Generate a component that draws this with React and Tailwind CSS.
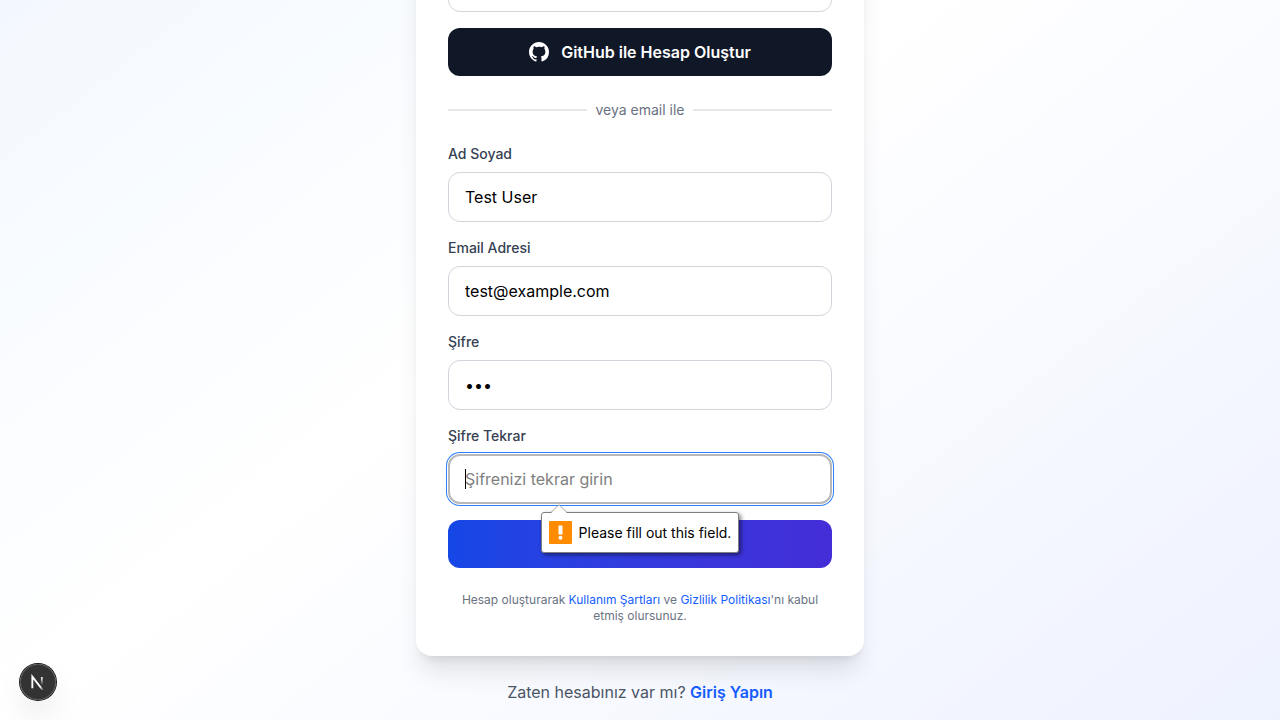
const inputClass =
  "block w-full rounded-xl border border-gray-300 bg-white px-4 py-3 text-base text-black outline-none";
const labelClass = "mb-2 block text-sm font-medium text-gray-700";

function Field({ id, label, type, value }) {
  return (
    <div>
      <label htmlFor={id} className={labelClass}>{label}</label>
      <input id={id} type={type} defaultValue={value} className={inputClass} />
    </div>
  );
}

function GithubMark() {
  return (
    <svg className="mr-3 h-5 w-5" fill="currentColor" viewBox="0 0 20 20" aria-hidden="true">
      <path
        fillRule="evenodd"
        clipRule="evenodd"
        d="M10 0C4.477 0 0 4.484 0 10.017c0 4.425 2.865 8.18 6.839 9.504.5.092.682-.217.682-.483 0-.237-.008-.868-.013-1.703-2.782.605-3.369-1.343-3.369-1.343-.454-1.158-1.11-1.466-1.11-1.466-.908-.62.069-.608.069-.608 1.003.07 1.531 1.032 1.531 1.032.892 1.53 2.341 1.088 2.91.832.092-.647.35-1.088.636-1.338-2.22-.253-4.555-1.113-4.555-4.951 0-1.093.39-1.988 1.029-2.688-.103-.253-.446-1.272.098-2.65 0 0 .84-.27 2.75 1.026A9.564 9.564 0 0110 4.844c.85.004 1.705.115 2.504.337 1.909-1.296 2.747-1.027 2.747-1.027.546 1.379.203 2.398.1 2.651.64.7 1.028 1.595 1.028 2.688 0 3.848-2.339 4.695-4.566 4.942.359.31.678.921.678 1.856 0 1.338-.012 2.419-.012 2.747 0 .268.18.58.688.482A10.019 10.019 0 0020 10.017C20 4.484 15.522 0 10 0z"
      />
    </svg>
  );
}

function ValidationBubble() {
  return (
    <div
      role="alert"
      className="absolute inset-x-0 top-full z-10 mx-auto mt-2 flex w-fit items-center gap-[7px] rounded-[3px] border border-[#808080] bg-white px-[7px] py-2 text-sm whitespace-nowrap text-black shadow-[2px_2px_4px_rgba(0,0,0,0.5)]"
    >
      <svg className="absolute -top-[9px] left-[9px] h-[9px] w-4" viewBox="0 0 16 9" aria-hidden="true">
        <path d="M0 9 L8 0.7 L16 9 Z" fill="#fff" />
        <path d="M0 8.5 L8 0.7 L16 8.5" fill="none" stroke="#999" strokeWidth="0.9" />
      </svg>
      <svg className="h-[23px] w-[23px]" viewBox="0 0 23 23" aria-hidden="true">
        <rect width="23" height="23" rx="1" fill="#ff8c00" />
        <path d="M9.5 4.5h4v9h-4z" fill="#fff" />
        <circle cx="11.5" cy="16.8" r="2" fill="#fff" />
      </svg>
      Please fill out this field.
    </div>
  );
}

function DevBadge() {
  return (
    <button
      type="button"
      aria-label="Open Next.js Dev Tools"
      className="fixed bottom-5 left-5 flex h-9 w-9 items-center justify-center rounded-full bg-black/80 shadow-[0_0_0_1px_#171717,inset_0_0_0_1px_rgba(255,255,255,0.14),0_16px_32px_-8px_rgba(0,0,0,0.24)]"
    >
      <svg className="h-4 w-4" viewBox="0 -1.6 16 16" fill="none" aria-hidden="true">
        <defs>
          <linearGradient id="n-diagonal" x1="9.96" y1="11.12" x2="15.48" y2="17.97" gradientUnits="userSpaceOnUse">
            <stop stopColor="#fff" />
            <stop offset="0.6" stopColor="#fff" stopOpacity="0" />
          </linearGradient>
          <linearGradient id="n-stem" x1="11.82" y1="1.4" x2="11.79" y2="9.63" gradientUnits="userSpaceOnUse">
            <stop stopColor="#fff" />
            <stop offset="1" stopColor="#fff" stopOpacity="0" />
          </linearGradient>
        </defs>
        <path d="M13.3 15.2 L2.34 1 V12.6" stroke="url(#n-diagonal)" strokeWidth="1.86" />
        <path d="M11.825 1.5 V13.1" stroke="url(#n-stem)" strokeWidth="1.86" />
      </svg>
    </button>
  );
}

export default function App() {
  return (
    <div className="flex h-screen flex-col justify-end overflow-hidden font-['Inter',sans-serif]">
      <main className="flex shrink-0 justify-center bg-linear-to-br from-blue-50 via-white to-indigo-50 px-4 pt-52 pb-4">
        <div className="w-full max-w-md">
          <div className="rounded-2xl bg-white p-8 shadow-xl">
            <div className="space-y-4">
              <button
                type="button"
                aria-label="Google ile Hesap Oluştur"
                className="block h-[50px] w-full rounded-xl border border-gray-300 bg-white"
              />
              <button
                type="button"
                className="flex w-full items-center justify-center rounded-xl bg-gray-900 px-4 py-3 font-semibold text-white"
              >
                <GithubMark />
                GitHub ile Hesap Oluştur
              </button>
            </div>

            <div className="my-6 flex items-center text-sm text-gray-500">
              <span className="h-0.5 flex-1 bg-gray-200" />
              <span className="px-2">veya email ile</span>
              <span className="h-0.5 flex-1 bg-gray-200" />
            </div>

            <form className="space-y-4" noValidate onSubmit={(e) => e.preventDefault()}>
              <Field id="name" label="Ad Soyad" type="text" value="Test User" />
              <Field id="email" label="Email Adresi" type="email" value="test@example.com" />
              <Field id="password" label="Şifre" type="password" value="123" />
              <div>
                <label htmlFor="confirm" className={labelClass}>Şifre Tekrar</label>
                <div className="relative">
                  <input
                    id="confirm"
                    type="password"
                    placeholder="Şifrenizi tekrar girin"
                    className="block w-full rounded-xl border-2 border-[#b8b8b8] bg-white px-[15px] py-[11px] text-base text-black shadow-[0_0_0_1px_#fff,0_0_0_2px_#2b7fff] outline-none placeholder:text-[#808080]"
                  />
                  <span className="absolute top-[15px] left-[17px] h-5 w-px bg-black" />
                  <ValidationBubble />
                </div>
              </div>
              <button
                type="submit"
                className="block w-full rounded-xl bg-linear-to-r from-blue-700 to-indigo-700 px-4 py-3 font-semibold text-white"
              >
                Hesap Oluştur
              </button>
            </form>

            <p className="mt-6 text-center text-xs text-gray-500">
              Hesap oluşturarak{" "}
              <a href="#terms" className="text-blue-600">Kullanım Şartları</a> ve{" "}
              <a href="#privacy" className="text-blue-600">Gizlilik Politikası</a>'nı kabul etmiş olursunuz.
            </p>
          </div>

          <p className="mt-6 text-center text-gray-600">
            Zaten hesabınız var mı?{" "}
            <a href="#login" className="font-semibold text-blue-600">Giriş Yapın</a>
          </p>
        </div>
      </main>
      <DevBadge />
    </div>
  );
}
